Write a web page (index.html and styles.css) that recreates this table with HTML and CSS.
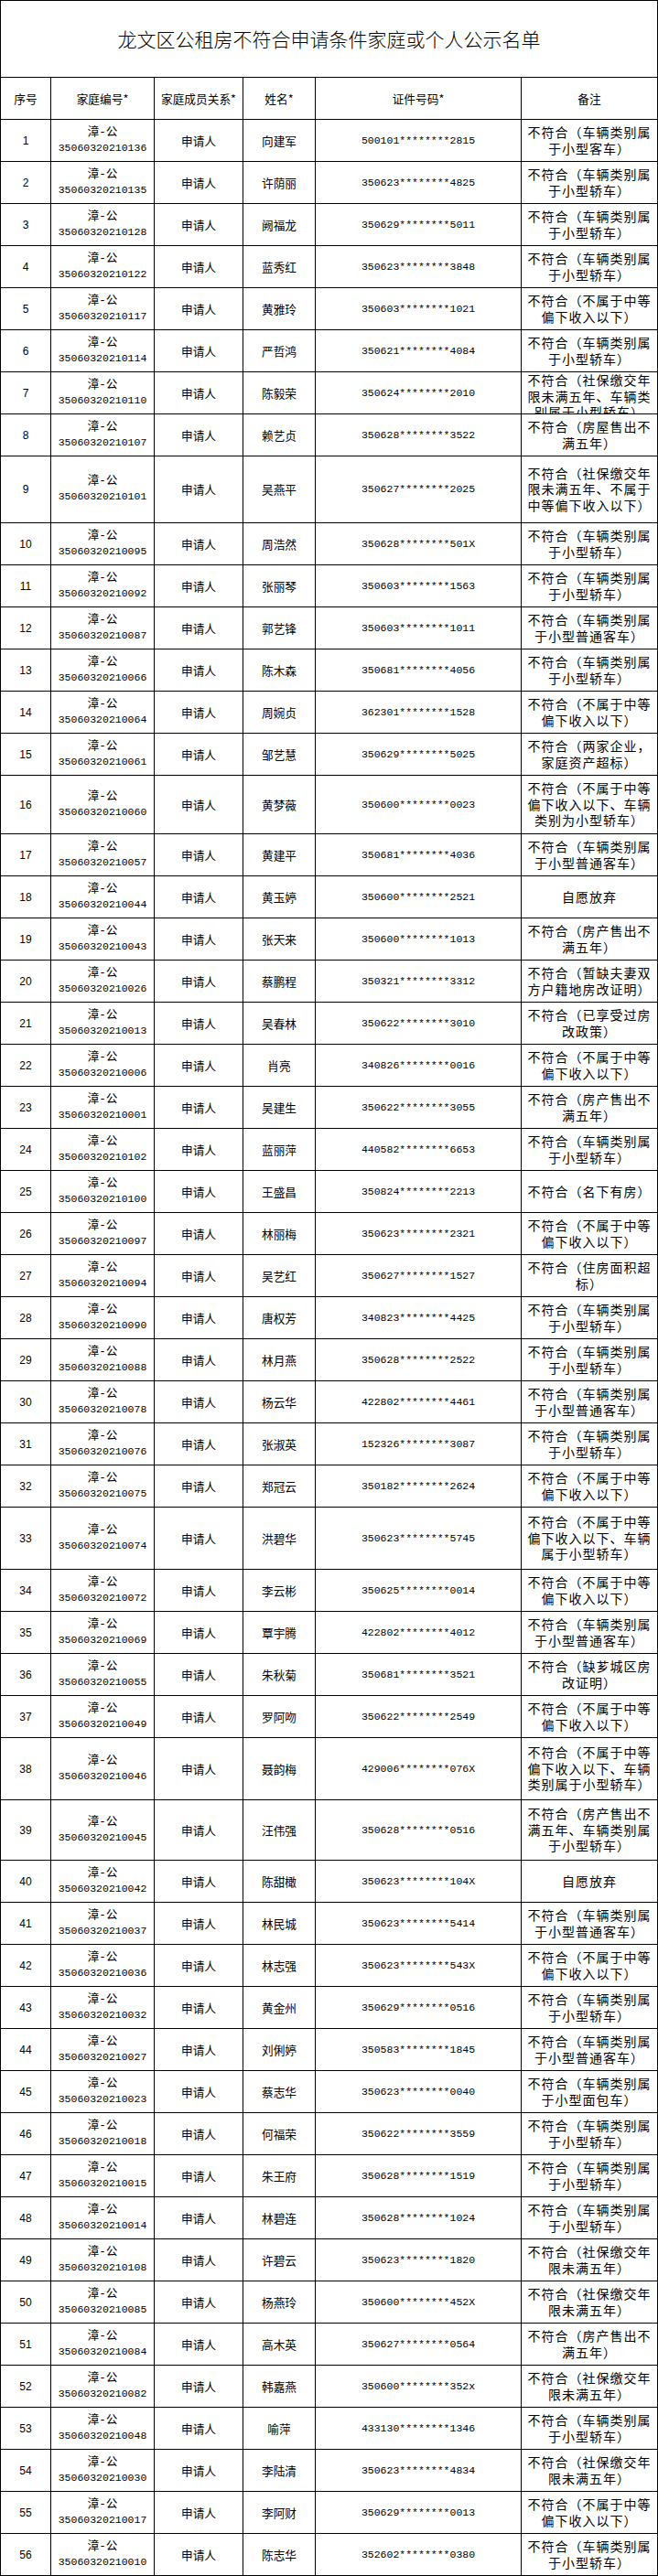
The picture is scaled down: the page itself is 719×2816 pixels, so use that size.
FILE: index.html
```html
<!DOCTYPE html>
<html lang="zh-CN">
<head>
<meta charset="utf-8">
<title>龙文区公租房不符合申请条件家庭或个人公示名单</title>
<link rel="stylesheet" href="styles.css">
</head>
<body>
<div class="sheet">
  <div class="title">龙文区公租房不符合申请条件家庭或个人公示名单</div>
  <div class="row head">
    <div>序号</div><div>家庭编号*</div><div>家庭成员关系*</div><div>姓名*</div><div>证件号码*</div><div>备注</div>
  </div>
  <div class="row"><div class="no">1</div><div class="code"><span class="cp">漳-公</span><span class="cn">35060320210136</span></div><div>申请人</div><div>向建军</div><div class="id">500101********2815</div><div class="rm">不符合（车辆类别属于小型客车）</div></div>
  <div class="row"><div class="no">2</div><div class="code"><span class="cp">漳-公</span><span class="cn">35060320210135</span></div><div>申请人</div><div>许荫丽</div><div class="id">350623********4825</div><div class="rm">不符合（车辆类别属于小型轿车）</div></div>
  <div class="row"><div class="no">3</div><div class="code"><span class="cp">漳-公</span><span class="cn">35060320210128</span></div><div>申请人</div><div>阙福龙</div><div class="id">350629********5011</div><div class="rm">不符合（车辆类别属于小型轿车）</div></div>
  <div class="row"><div class="no">4</div><div class="code"><span class="cp">漳-公</span><span class="cn">35060320210122</span></div><div>申请人</div><div>蓝秀红</div><div class="id">350623********3848</div><div class="rm">不符合（车辆类别属于小型轿车）</div></div>
  <div class="row"><div class="no">5</div><div class="code"><span class="cp">漳-公</span><span class="cn">35060320210117</span></div><div>申请人</div><div>黄雅玲</div><div class="id">350603********1021</div><div class="rm">不符合（不属于中等偏下收入以下）</div></div>
  <div class="row"><div class="no">6</div><div class="code"><span class="cp">漳-公</span><span class="cn">35060320210114</span></div><div>申请人</div><div>严哲鸿</div><div class="id">350621********4084</div><div class="rm">不符合（车辆类别属于小型轿车）</div></div>
  <div class="row"><div class="no">7</div><div class="code"><span class="cp">漳-公</span><span class="cn">35060320210110</span></div><div>申请人</div><div>陈毅荣</div><div class="id">350624********2010</div><div class="rm">不符合（社保缴交年限未满五年、车辆类别属于小型轿车）</div></div>
  <div class="row"><div class="no">8</div><div class="code"><span class="cp">漳-公</span><span class="cn">35060320210107</span></div><div>申请人</div><div>赖艺贞</div><div class="id">350628********3522</div><div class="rm">不符合（房屋售出不满五年）</div></div>
  <div class="row h72"><div class="no">9</div><div class="code"><span class="cp">漳-公</span><span class="cn">35060320210101</span></div><div>申请人</div><div>吴燕平</div><div class="id">350627********2025</div><div class="rm">不符合（社保缴交年限未满五年、不属于中等偏下收入以下）</div></div>
  <div class="row"><div class="no">10</div><div class="code"><span class="cp">漳-公</span><span class="cn">35060320210095</span></div><div>申请人</div><div>周浩然</div><div class="id">350628********501X</div><div class="rm">不符合（车辆类别属于小型轿车）</div></div>
  <div class="row"><div class="no">11</div><div class="code"><span class="cp">漳-公</span><span class="cn">35060320210092</span></div><div>申请人</div><div>张丽琴</div><div class="id">350603********1563</div><div class="rm">不符合（车辆类别属于小型轿车）</div></div>
  <div class="row"><div class="no">12</div><div class="code"><span class="cp">漳-公</span><span class="cn">35060320210087</span></div><div>申请人</div><div>郭艺锋</div><div class="id">350603********1011</div><div class="rm">不符合（车辆类别属于小型普通客车）</div></div>
  <div class="row"><div class="no">13</div><div class="code"><span class="cp">漳-公</span><span class="cn">35060320210066</span></div><div>申请人</div><div>陈木森</div><div class="id">350681********4056</div><div class="rm">不符合（车辆类别属于小型轿车）</div></div>
  <div class="row"><div class="no">14</div><div class="code"><span class="cp">漳-公</span><span class="cn">35060320210064</span></div><div>申请人</div><div>周婉贞</div><div class="id">362301********1528</div><div class="rm">不符合（不属于中等偏下收入以下）</div></div>
  <div class="row"><div class="no">15</div><div class="code"><span class="cp">漳-公</span><span class="cn">35060320210061</span></div><div>申请人</div><div>邹艺慧</div><div class="id">350629********5025</div><div class="rm">不符合（两家企业，家庭资产超标）</div></div>
  <div class="row h63"><div class="no">16</div><div class="code"><span class="cp">漳-公</span><span class="cn">35060320210060</span></div><div>申请人</div><div>黄梦薇</div><div class="id">350600********0023</div><div class="rm">不符合（不属于中等偏下收入以下、车辆类别为小型轿车）</div></div>
  <div class="row"><div class="no">17</div><div class="code"><span class="cp">漳-公</span><span class="cn">35060320210057</span></div><div>申请人</div><div>黄建平</div><div class="id">350681********4036</div><div class="rm">不符合（车辆类别属于小型普通客车）</div></div>
  <div class="row"><div class="no">18</div><div class="code"><span class="cp">漳-公</span><span class="cn">35060320210044</span></div><div>申请人</div><div>黄玉婷</div><div class="id">350600********2521</div><div class="rm">自愿放弃</div></div>
  <div class="row"><div class="no">19</div><div class="code"><span class="cp">漳-公</span><span class="cn">35060320210043</span></div><div>申请人</div><div>张天来</div><div class="id">350600********1013</div><div class="rm">不符合（房产售出不满五年）</div></div>
  <div class="row"><div class="no">20</div><div class="code"><span class="cp">漳-公</span><span class="cn">35060320210026</span></div><div>申请人</div><div>蔡鹏程</div><div class="id">350321********3312</div><div class="rm">不符合（暂缺夫妻双方户籍地房改证明）</div></div>
  <div class="row"><div class="no">21</div><div class="code"><span class="cp">漳-公</span><span class="cn">35060320210013</span></div><div>申请人</div><div>吴春林</div><div class="id">350622********3010</div><div class="rm">不符合（已享受过房改政策）</div></div>
  <div class="row"><div class="no">22</div><div class="code"><span class="cp">漳-公</span><span class="cn">35060320210006</span></div><div>申请人</div><div>肖亮</div><div class="id">340826********0016</div><div class="rm">不符合（不属于中等偏下收入以下）</div></div>
  <div class="row"><div class="no">23</div><div class="code"><span class="cp">漳-公</span><span class="cn">35060320210001</span></div><div>申请人</div><div>吴建生</div><div class="id">350622********3055</div><div class="rm">不符合（房产售出不满五年）</div></div>
  <div class="row"><div class="no">24</div><div class="code"><span class="cp">漳-公</span><span class="cn">35060320210102</span></div><div>申请人</div><div>蓝丽萍</div><div class="id">440582********6653</div><div class="rm">不符合（车辆类别属于小型轿车）</div></div>
  <div class="row"><div class="no">25</div><div class="code"><span class="cp">漳-公</span><span class="cn">35060320210100</span></div><div>申请人</div><div>王盛昌</div><div class="id">350824********2213</div><div class="rm">不符合（名下有房）</div></div>
  <div class="row"><div class="no">26</div><div class="code"><span class="cp">漳-公</span><span class="cn">35060320210097</span></div><div>申请人</div><div>林丽梅</div><div class="id">350623********2321</div><div class="rm">不符合（不属于中等偏下收入以下）</div></div>
  <div class="row"><div class="no">27</div><div class="code"><span class="cp">漳-公</span><span class="cn">35060320210094</span></div><div>申请人</div><div>吴艺红</div><div class="id">350627********1527</div><div class="rm">不符合（住房面积超标）</div></div>
  <div class="row"><div class="no">28</div><div class="code"><span class="cp">漳-公</span><span class="cn">35060320210090</span></div><div>申请人</div><div>唐权芳</div><div class="id">340823********4425</div><div class="rm">不符合（车辆类别属于小型轿车）</div></div>
  <div class="row"><div class="no">29</div><div class="code"><span class="cp">漳-公</span><span class="cn">35060320210088</span></div><div>申请人</div><div>林月燕</div><div class="id">350628********2522</div><div class="rm">不符合（车辆类别属于小型轿车）</div></div>
  <div class="row"><div class="no">30</div><div class="code"><span class="cp">漳-公</span><span class="cn">35060320210078</span></div><div>申请人</div><div>杨云华</div><div class="id">422802********4461</div><div class="rm">不符合（车辆类别属于小型普通客车）</div></div>
  <div class="row"><div class="no">31</div><div class="code"><span class="cp">漳-公</span><span class="cn">35060320210076</span></div><div>申请人</div><div>张淑英</div><div class="id">152326********3087</div><div class="rm">不符合（车辆类别属于小型轿车）</div></div>
  <div class="row"><div class="no">32</div><div class="code"><span class="cp">漳-公</span><span class="cn">35060320210075</span></div><div>申请人</div><div>郑冠云</div><div class="id">350182********2624</div><div class="rm">不符合（不属于中等偏下收入以下）</div></div>
  <div class="row h67"><div class="no">33</div><div class="code"><span class="cp">漳-公</span><span class="cn">35060320210074</span></div><div>申请人</div><div>洪碧华</div><div class="id">350623********5745</div><div class="rm">不符合（不属于中等偏下收入以下、车辆属于小型轿车）</div></div>
  <div class="row"><div class="no">34</div><div class="code"><span class="cp">漳-公</span><span class="cn">35060320210072</span></div><div>申请人</div><div>李云彬</div><div class="id">350625********0014</div><div class="rm">不符合（不属于中等偏下收入以下）</div></div>
  <div class="row"><div class="no">35</div><div class="code"><span class="cp">漳-公</span><span class="cn">35060320210069</span></div><div>申请人</div><div>覃宇腾</div><div class="id">422802********4012</div><div class="rm">不符合（车辆类别属于小型普通客车）</div></div>
  <div class="row"><div class="no">36</div><div class="code"><span class="cp">漳-公</span><span class="cn">35060320210055</span></div><div>申请人</div><div>朱秋菊</div><div class="id">350681********3521</div><div class="rm">不符合（缺芗城区房改证明）</div></div>
  <div class="row"><div class="no">37</div><div class="code"><span class="cp">漳-公</span><span class="cn">35060320210049</span></div><div>申请人</div><div>罗阿吻</div><div class="id">350622********2549</div><div class="rm">不符合（不属于中等偏下收入以下）</div></div>
  <div class="row h67"><div class="no">38</div><div class="code"><span class="cp">漳-公</span><span class="cn">35060320210046</span></div><div>申请人</div><div>聂韵梅</div><div class="id">429006********076X</div><div class="rm">不符合（不属于中等偏下收入以下、车辆类别属于小型轿车）</div></div>
  <div class="row h65"><div class="no">39</div><div class="code"><span class="cp">漳-公</span><span class="cn">35060320210045</span></div><div>申请人</div><div>汪伟强</div><div class="id">350628********0516</div><div class="rm">不符合（房产售出不满五年、车辆类别属于小型轿车）</div></div>
  <div class="row"><div class="no">40</div><div class="code"><span class="cp">漳-公</span><span class="cn">35060320210042</span></div><div>申请人</div><div>陈甜橄</div><div class="id">350623********104X</div><div class="rm">自愿放弃</div></div>
  <div class="row"><div class="no">41</div><div class="code"><span class="cp">漳-公</span><span class="cn">35060320210037</span></div><div>申请人</div><div>林民城</div><div class="id">350623********5414</div><div class="rm">不符合（车辆类别属于小型普通客车）</div></div>
  <div class="row"><div class="no">42</div><div class="code"><span class="cp">漳-公</span><span class="cn">35060320210036</span></div><div>申请人</div><div>林志强</div><div class="id">350623********543X</div><div class="rm">不符合（不属于中等偏下收入以下）</div></div>
  <div class="row"><div class="no">43</div><div class="code"><span class="cp">漳-公</span><span class="cn">35060320210032</span></div><div>申请人</div><div>黄金州</div><div class="id">350629********0516</div><div class="rm">不符合（车辆类别属于小型轿车）</div></div>
  <div class="row"><div class="no">44</div><div class="code"><span class="cp">漳-公</span><span class="cn">35060320210027</span></div><div>申请人</div><div>刘俐婷</div><div class="id">350583********1845</div><div class="rm">不符合（车辆类别属于小型普通客车）</div></div>
  <div class="row"><div class="no">45</div><div class="code"><span class="cp">漳-公</span><span class="cn">35060320210023</span></div><div>申请人</div><div>蔡志华</div><div class="id">350623********0040</div><div class="rm">不符合（车辆类别属于小型面包车）</div></div>
  <div class="row"><div class="no">46</div><div class="code"><span class="cp">漳-公</span><span class="cn">35060320210018</span></div><div>申请人</div><div>何福荣</div><div class="id">350622********3559</div><div class="rm">不符合（车辆类别属于小型轿车）</div></div>
  <div class="row"><div class="no">47</div><div class="code"><span class="cp">漳-公</span><span class="cn">35060320210015</span></div><div>申请人</div><div>朱王府</div><div class="id">350628********1519</div><div class="rm">不符合（车辆类别属于小型轿车）</div></div>
  <div class="row"><div class="no">48</div><div class="code"><span class="cp">漳-公</span><span class="cn">35060320210014</span></div><div>申请人</div><div>林碧连</div><div class="id">350628********1024</div><div class="rm">不符合（车辆类别属于小型轿车）</div></div>
  <div class="row"><div class="no">49</div><div class="code"><span class="cp">漳-公</span><span class="cn">35060320210108</span></div><div>申请人</div><div>许碧云</div><div class="id">350623********1820</div><div class="rm">不符合（社保缴交年限未满五年）</div></div>
  <div class="row"><div class="no">50</div><div class="code"><span class="cp">漳-公</span><span class="cn">35060320210085</span></div><div>申请人</div><div>杨燕玲</div><div class="id">350600********452X</div><div class="rm">不符合（社保缴交年限未满五年）</div></div>
  <div class="row"><div class="no">51</div><div class="code"><span class="cp">漳-公</span><span class="cn">35060320210084</span></div><div>申请人</div><div>高木英</div><div class="id">350627********0564</div><div class="rm">不符合（房产售出不满五年）</div></div>
  <div class="row"><div class="no">52</div><div class="code"><span class="cp">漳-公</span><span class="cn">35060320210082</span></div><div>申请人</div><div>韩嘉燕</div><div class="id">350600********352x</div><div class="rm">不符合（社保缴交年限未满五年）</div></div>
  <div class="row"><div class="no">53</div><div class="code"><span class="cp">漳-公</span><span class="cn">35060320210048</span></div><div>申请人</div><div>喻萍</div><div class="id">433130********1346</div><div class="rm">不符合（车辆类别属于小型轿车）</div></div>
  <div class="row"><div class="no">54</div><div class="code"><span class="cp">漳-公</span><span class="cn">35060320210030</span></div><div>申请人</div><div>李陆清</div><div class="id">350623********4834</div><div class="rm">不符合（社保缴交年限未满五年）</div></div>
  <div class="row"><div class="no">55</div><div class="code"><span class="cp">漳-公</span><span class="cn">35060320210017</span></div><div>申请人</div><div>李阿财</div><div class="id">350629********0013</div><div class="rm">不符合（不属于中等偏下收入以下）</div></div>
  <div class="row"><div class="no">56</div><div class="code"><span class="cp">漳-公</span><span class="cn">35060320210010</span></div><div>申请人</div><div>陈志华</div><div class="id">352602********0380</div><div class="rm">不符合（车辆类别属于小型轿车）</div></div>
</div>
</body>
</html>
```
FILE: styles.css
```css
html, body {
  margin: 0;
  padding: 0;
  background: #fff;
}

body {
  font-family: "Noto Sans CJK SC", sans-serif;
  color: #000;
  font-size: 12.7px;
}

.sheet {
  width: 719px;
  box-sizing: border-box;
  display: flex;
  flex-direction: column;
  gap: 1px;
  padding: 1px;
  background: #000;
}

.title {
  height: 83px;
  background: #fff;
  display: flex;
  align-items: center;
  justify-content: center;
  font-size: 21px;
  font-weight: 300;
  line-height: 1;
}

.row {
  display: grid;
  grid-template-columns: 54px 112px 96px 78px 224px 148px;
  column-gap: 1px;
  height: 45px;
}

.row.h72 { height: 72px; }
.row.h63 { height: 63px; }
.row.h67 { height: 67px; }
.row.h65 { height: 65px; }

.row > div {
  background: #fff;
  display: flex;
  align-items: safe center;
  justify-content: center;
  text-align: center;
  overflow: hidden;
  line-height: 16px;
  min-width: 0;
}

.row .no {
  font-family: "Liberation Sans", Arial, sans-serif;
  font-size: 12px;
}

.row .code {
  flex-direction: column;
  line-height: 16.7px;
  font-family: "Liberation Mono", "Noto Sans CJK SC", monospace;
}

.code .cp {
  font-size: 12.7px;
}

.code .cn {
  font-size: 11.5px;
}

.row .id {
  font-family: "Liberation Mono", monospace;
  font-size: 11.5px;
}

.row .rm {
  font-size: 14px;
  letter-spacing: 1px;
  line-height: 17.5px;
  padding: 0 1px;
}

.head > div {
  font-size: 12.7px;
}
```
